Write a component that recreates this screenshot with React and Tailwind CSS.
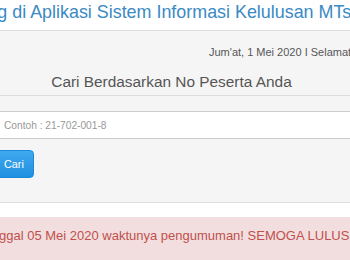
const App = () => {
  return (
    <div className="w-[350px] h-[260px] overflow-hidden bg-white font-['Liberation_Sans',Arial,sans-serif]">
      {/* page title, cut off at both sides */}
      <div className="h-[30px] whitespace-nowrap">
        <h1 className="-ml-[121px] text-[17.9px] leading-[24px] text-[#3a8ac3]">
          Selamat Datang di Aplikasi Sistem Informasi Kelulusan MTs Negeri
        </h1>
      </div>

      {/* search panel */}
      <div className="border-y border-[#dddddd] bg-[#f5f5f5]">
        <div className="border-b border-[#dddddd] pb-[3px]">
          <p className="pl-[209px] pt-[14px] whitespace-nowrap text-[11px] leading-[14px] text-[#555555]">
            Jum'at, 1 Mei 2020 I Selamat Datang
          </p>
          <h3 className="mt-[13px] pr-[7px] text-center text-[15.4px] leading-[20px] text-[#555555]">
            Cari Berdasarkan No Peserta Anda
          </h3>
        </div>
        <div className="pt-[15px] pb-[24px]">
          <input
            type="text"
            placeholder="Contoh : 21-702-001-8"
            className="-ml-[10px] block h-[28px] w-[380px] border border-[#cccccc] bg-white pl-[13px] text-[10.2px] text-[#555555] placeholder:text-[#999999] outline-none"
          />
          <button
            type="button"
            className="-ml-[9px] mt-[11px] block h-[28px] rounded-[4px] border border-[#1a8ad8] bg-gradient-to-b from-[#3fa9f0] to-[#1e90e0] pl-[12px] pr-[9px] text-[10.8px] text-white"
          >
            Cari
          </button>
        </div>
      </div>

      {/* announcement */}
      <div className="mt-[14px] h-[60px] bg-[#f2dede] pt-[11px] whitespace-nowrap">
        <p className="-ml-[22px] text-[13px] leading-[16px] text-[#c0504d]">
          Tanggal 05 Mei 2020 waktunya pengumuman! SEMOGA LULUS SEMUA
        </p>
      </div>
    </div>
  );
};

export default App;
